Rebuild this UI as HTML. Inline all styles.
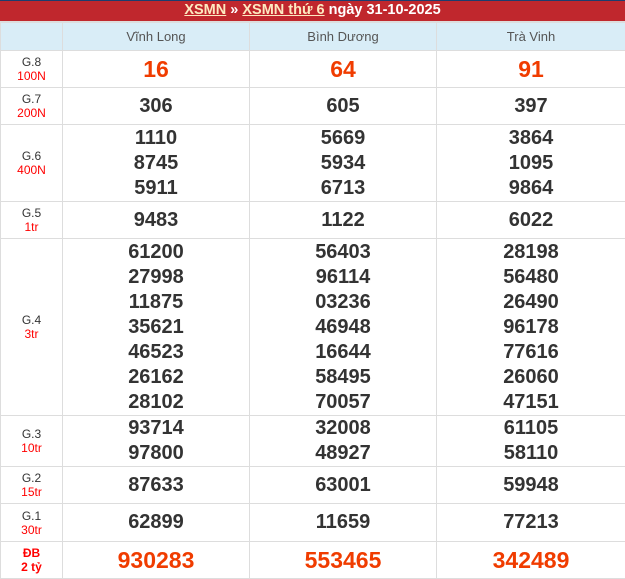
<!DOCTYPE html>
<html><head><meta charset="utf-8"><style>
body{margin:0;width:625px;height:579px;overflow:hidden;background:#fff;font-family:"Liberation Sans",Arial,sans-serif}
.top{height:1px;background:#1c3d6e}
.bar{height:20px;background:#c0272d;color:#fff;font-weight:bold;font-size:14.5px;text-align:center;line-height:18px;border-bottom:1px solid #ddd}
.bar u{color:#fde9c0}
table{border-collapse:collapse;width:625px;table-layout:fixed}
td{border:1px solid #ddd;text-align:center;padding:0;vertical-align:middle}
th{border:1px solid #ddd;background:#d9edf7;font-weight:normal;color:#555;font-size:13px;height:27px;padding:0}
td.l{font-size:12px;color:#333;line-height:14px}
td.l span{color:#f00;display:block}
td.n{font-size:20px;font-weight:bold;color:#333;line-height:25px}
td.r{color:#f03c00;font-size:23px}
td.db{color:#f00;font-weight:bold}
</style></head><body>
<div class="top"></div>
<div class="bar"><u>XSMN</u> » <u>XSMN thứ 6</u> ngày 31-10-2025</div>
<table>
<colgroup><col style="width:62px"><col style="width:187px"><col style="width:187px"><col style="width:189px"></colgroup>
<tr><th></th><th>Vĩnh Long</th><th>Bình Dương</th><th>Trà Vinh</th></tr>
<tr style="height:37px"><td class="l">G.8<span>100N</span></td><td class="n r">16</td><td class="n r">64</td><td class="n r">91</td></tr>
<tr style="height:37px"><td class="l">G.7<span>200N</span></td><td class="n">306</td><td class="n">605</td><td class="n">397</td></tr>
<tr style="height:77px"><td class="l">G.6<span>400N</span></td><td class="n">1110<br>8745<br>5911</td><td class="n">5669<br>5934<br>6713</td><td class="n">3864<br>1095<br>9864</td></tr>
<tr style="height:37px"><td class="l">G.5<span>1tr</span></td><td class="n">9483</td><td class="n">1122</td><td class="n">6022</td></tr>
<tr style="height:177px"><td class="l">G.4<span>3tr</span></td><td class="n">61200<br>27998<br>11875<br>35621<br>46523<br>26162<br>28102</td><td class="n">56403<br>96114<br>03236<br>46948<br>16644<br>58495<br>70057</td><td class="n">28198<br>56480<br>26490<br>96178<br>77616<br>26060<br>47151</td></tr>
<tr style="height:50px"><td class="l">G.3<span>10tr</span></td><td class="n">93714<br>97800</td><td class="n">32008<br>48927</td><td class="n">61105<br>58110</td></tr>
<tr style="height:37px"><td class="l">G.2<span>15tr</span></td><td class="n">87633</td><td class="n">63001</td><td class="n">59948</td></tr>
<tr style="height:38px"><td class="l">G.1<span>30tr</span></td><td class="n">62899</td><td class="n">11659</td><td class="n">77213</td></tr>
<tr style="height:37px"><td class="l db">ĐB<span>2 tỷ</span></td><td class="n r">930283</td><td class="n r">553465</td><td class="n r">342489</td></tr>
</table>
</body></html>
